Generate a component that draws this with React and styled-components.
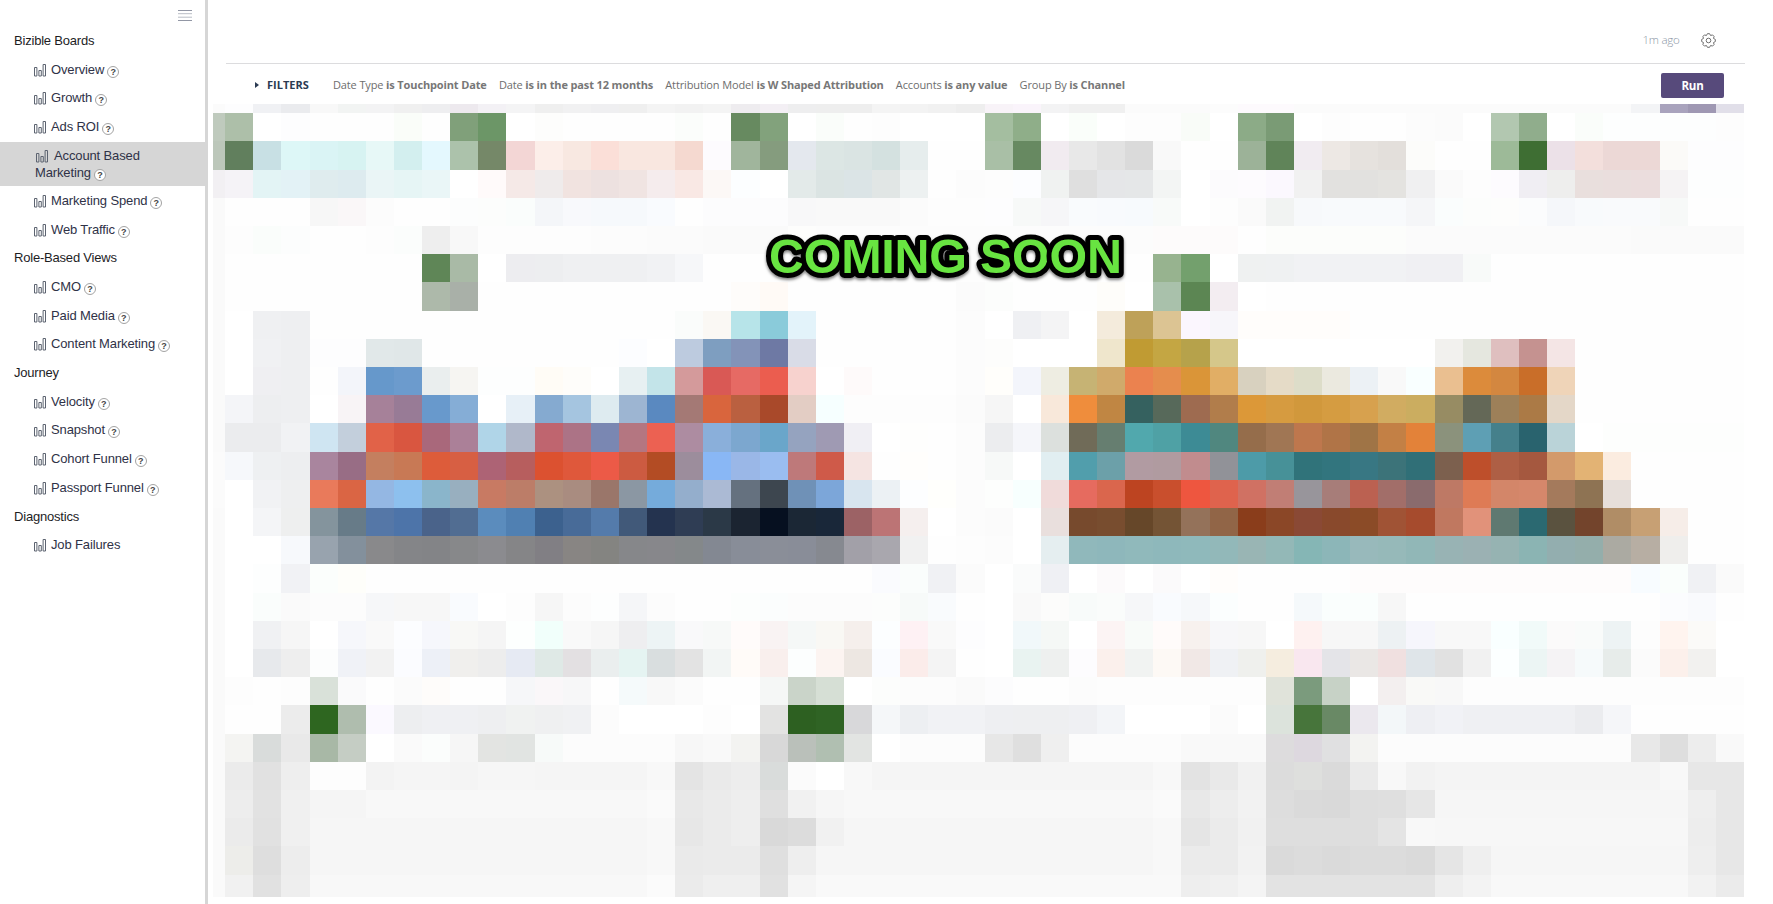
import React from 'react';
import styled, { createGlobalStyle, css } from 'styled-components';

const GlobalStyle = createGlobalStyle`
  * { box-sizing: border-box; }
  body { margin: 0; background: #fff; }
`;

const Page = styled.div`
  display: flex;
  width: 100%;
  height: 904px;
  overflow: hidden;
  background: #fff;
`;

const Sidebar = styled.nav`
  flex: none;
  width: 208px;
  border-right: 3px solid #d6d6d6;
  font-family: 'Liberation Sans', Arial, sans-serif;
  font-size: 13px;
`;

const MenuBar = styled.div`
  display: flex;
  justify-content: flex-end;
  height: 27px;
  padding: 10px 13px 0 0;
`;

const SectionTitle = styled.div`
  height: 28.7px;
  padding-left: 14px;
  line-height: 28.7px;
  color: #1d1d1f;
  letter-spacing: -0.2px;
`;

const NavItem = styled.div`
  height: 28.7px;
  padding-left: 33px;
  line-height: 28.7px;
  color: #2f3247;
  letter-spacing: -0.13px;
  white-space: nowrap;

  svg { vertical-align: -3px; margin-right: 4px; }

  ${(p) => p.$active && css`
    height: 44px;
    margin: 0 0 1.2px;
    padding: 5px 50px 0 35px;
    line-height: 17px;
    background: #d6d6d6;
    white-space: normal;
    svg { margin-right: 5px; }
  `}
`;

const Help = styled.span`
  display: inline-flex;
  align-items: center;
  justify-content: center;
  width: 12px;
  height: 12px;
  margin-left: 3px;
  border: 1px solid #a3a3a3;
  border-radius: 50%;
  background: #fff;
  color: #444;
  font-size: 9px;
  font-weight: 700;
  line-height: 10px;
  letter-spacing: 0;
  vertical-align: -1px;
`;

const Main = styled.main`
  flex: 1;
  min-width: 0;
  padding: 0 28px 0 5px;
  font-family: 'Open Sans', sans-serif;
`;

const StatusBar = styled.header`
  display: flex;
  align-items: flex-end;
  justify-content: flex-end;
  gap: 21px;
  height: 64px;
  margin-left: 13px;
  padding: 0 29.5px 15px 0;
  border-bottom: 1px solid #dcdcde;
`;

const Updated = styled.span`
  color: #8b96a5;
  font-size: 11.5px;
  font-weight: 300;
  line-height: 16px;
  letter-spacing: -0.25px;
`;

const FilterBar = styled.div`
  display: flex;
  align-items: center;
  height: 40px;
  padding: 0 21px 0 42px;
  font-size: 11px;
  color: #7c7c7c;
`;

const Caret = styled.i`
  width: 0;
  height: 0;
  margin: 2px 8px 0 0;
  border: 3.5px solid transparent;
  border-left: 4px solid #2b3b52;
  border-right: 0;
`;

const FiltersLabel = styled.span`
  width: 66px;
  color: #2b3b52;
  font-weight: 700;
`;

const Filter = styled.span`
  margin-right: 12.2px;
  color: #6e6e6e;
  letter-spacing: -0.132px;
  white-space: nowrap;
  b { color: #777; font-weight: 700; }
`;

const RunButton = styled.button`
  width: 63px;
  height: 25px;
  margin: 3px 0 0 auto;
  padding: 0;
  border: 0;
  border-radius: 2px;
  background: #574a7b;
  color: #fff;
  font: 700 11.5px/23px 'Open Sans', sans-serif;
  letter-spacing: -0.2px;
`;

const Board = styled.section`
  position: relative;
  width: 1532.4px;
`;

const MosaicRow = styled.div`
  display: grid;
  grid-template-columns: 12.2px repeat(54, 28.14px);
  height: ${(p) => p.$height};
`;

const Tile = styled.i`
  display: block;
`;

const Banner = styled.svg`
  position: absolute;
  left: 546px;
  top: 114px;
  filter: drop-shadow(0 2px 1.5px rgba(0, 0, 0, 0.5));

  text {
    fill: #68e441;
    stroke: #000;
    stroke-width: 10px;
    stroke-linejoin: round;
    paint-order: stroke fill;
    font: 700 48.5px 'Liberation Sans', Arial, sans-serif;
  }
`;

// A six-digit colour fills one column; "@n" repeats the last colour up to column n.
const rows = [
  'fbfbfb fdfdfe f0f1f4 eaebee f8f8f8 f2f4f3 f3f3f4 f0f0f0 eeeef0 ede9ee f3f1f5 f4f4f5 efefef f1f1f2 efeff1 efefef f4f4f4 f2f2f2 f4f4f4 eeecef f3eff4 eeeeef eeeeee eeeeee f4f4f4 f3f3f3 f1f1f1 eeeeee f8f3f8 faf4fb f3f3f4 f0f0f0 f0f0f0 fbfbfb @36 fcfcfc fdfafd fdfafd fbfbfb @51 f3f4f6 a9a3bd 9f98b3 e1dfe9',
  'bfcabd adbfa9 ffffff fdfdfe fefefe @7 fafdf9 fefefe 80a07a 6c9667 ffffff fdfdfc fefefe @17 fbfdfb fefefe 678a60 82a27c ffffff fafdfa fefefe fdfdfd ffffff @28 a4bea0 8fae89 ffffff fafefa ffffff fdfdfd fdfdfd f9fcf8 ffffff 8cab87 7a9b75 ffffff fdfdfd fefefe fefefe fcfcfc fbfbfb ffffff b2c7b0 90ad8c ffffff fafdfa fdfefe @54 fdfdfd',
  'bcc7ba 617f5d c8e0e4 ddf7f7 daf4f5 d7f3f2 e7f8f7 d3efef e4f8fe acc2ab 758868 f3d6d5 fceee9 f8e8e1 fbdfd8 f9e7e0 f9e7e0 f5d9d0 fdfbfe a0b59c 859c7e e4e8ee dce6e4 dae4e3 d4e1e0 e6eded fefefe fefefe a9bfa6 678961 f1ebf0 e8e8e8 e2e2e2 dadada f9f9f9 fefefe fefefe 9cb298 608459 f1ecf1 ede8e4 e6e2de e3dfdb fcfcfa fefefe fefefe 9dba98 3e6e33 ece1e8 f3dfdc ecd8d6 ecd8d6 fbfaf8 fdfdfe @55',
  'f2f0f3 f5f3f7 e3f4f5 e3f2f6 dfecee ddebef eaf5f6 e6f5f5 eaf6f7 ffffff fffafa f5e9e7 efebeb f1e3e0 ede1e0 f0e4e2 f5eced f9e8e4 fcf8f6 fcfeff ffffff e3eae9 dbe4e3 dbe4e6 e1e6e5 edf1f1 fefefe fcfcfc fdfdfd fcfdff f0f2f1 dfdfdf e5e6e8 e5e7e8 f3f5f4 ffffff fcfbfd fdfbfe fbf8fe f1f1f1 e2e1df e2e1df e4e3e0 f0f0f1 fafafa fdfdfd fdfbfe f0eef3 eeeeed e9dfdd eadedd ebdddd f5f3f4 fdfefe @55',
  'fafafa fefefe @4 f7f7f7 faf7f8 fcfcfc fefefe fefefe fcfdfd fcfdfc fafdfc f4f6f9 f8f9fc f6f9fc f6f9fc f9fbfe fefefe fcfcfd @21 f8f8f9 f9f9f9 @25 fbfbfb fdfdfd fdfdfd fdfdfe f7f9f8 f6f6f8 f9fbfd f8fafd f7fafd f8faf9 ffffff fdfdfd fafafa f1f3f2 f7f9fb f8fafc @43 f5f6f8 fafdfd fcfdfc fdfdfc fbfcfd f5f7fa f8fafc f9fafc f9fafc f7f9f8 fefefe @55',
  'fafafa fdfdfd fafdfb fcfdfd fefefe fefefe fdfdfd fbfdfc eeeeee f8f8f8 fdfdfd @14 fcfcfc fcfcfc fbfbfb fbfbfb fafafa @21 fdfdfc fcfcfc @34 fdfbfb @37 fefefe fcfdfb @43 fbfbfb @51 fafafa @55',
  'fafafa fefefe @8 5f8657 a9baa6 ffffff ededf0 edeef0 eff0f2 eff0f2 eff0f2 f1f2f4 f6f7f9 fefefe @26 fcfcfc fdfdfd fefefe @34 97b38f 73a06d ffffff eff1f1 eff1f2 f1f2f4 @43 f0f0f3 f0f0f3 f8faf9 fefefe @55',
  'fafafa fefefe @8 adb9aa a9b0a8 fefefe @19 fefcfa fffaf6 fefefe @27 fbfbfb fcfdfc fefefe @32 fefdfa ffffff a9c1ab 5c8653 f3edf1 ffffff fefefe @55',
  'fafafa ffffff eff0f2 eeeff1 fefefe @17 fafcfb faf8f4 b7e4e9 8acbda e3f3fa fefefe @27 fcfcfc ffffff eff0f3 f4f4f5 ffffff f4ebdc bea159 dcc493 fbf6fe f7f6fa fffdfb @41 fefefe @55',
  'fafafa ffffff f0f1f3 eeeff1 fdfdfe fdfdfe e1e8e9 e0e7e8 fefefe @15 fcfdff ffffff bdcbdf 7e9ec0 8393b8 6e79a4 d9dce7 fefefe @27 fcfcfc fdfdfc ffffff @32 efe6cc c09b33 c4a643 b6a24b d5c78a ffffff @44 f2f1ee e5e7df dfbfbf c59290 f4e5e5 fefefe @55',
  'fafafa ffffff efeff2 eeeff1 fefefe f3f5fa 6698cb 6c9bcd eaeeee f6f5f2 fdfefe fdfefe fffcf6 fefdfa ffffff e7f0f2 c3e4e9 d49a9b d95955 e66a64 eb5d4f f7d2ce ffffff fefafa fefefe @27 fcfcfc fffefb f3f5fb eeede2 c6b374 d0aa6b eb824f e58d4d da9538 e1ae65 d8d1bf e5dbc7 ddddc9 ebe9df ecf1f5 f9f9f9 f9ffff eabf90 dc8b3b d38740 c96e29 efd4b8 fefefe @55',
  'fafafa f4f5f8 edeef0 eeeff1 ffffff f8f4f6 a68199 987b96 6899cc 85add6 ffffff e7f0f7 85aad0 a5c5e0 deebf0 9db5d2 5a89c0 a47975 d9653d ba6040 a9492a e3cdc4 f6ffff fdfdfd @27 fbfbfb f6f6f6 ffffff f8e8da ef8d3c c08643 35615f 57695a 9e6b50 b17d4b dc9838 d69b40 d1983c d59c41 d7a14e d1ac61 cbad60 978c63 646857 9d8059 ab7a46 e4d7c8 fefefe @55',
  'fafafa ebecee ebecee f1f2f4 cfe5f2 c3cfdc e16248 d95640 a9687b ab8098 b0d5e8 b0b8ca bf656f ac7386 7a87b2 b47681 ec6152 ad8ca1 8aafda 7ca7cf 6aa6ca 95a3bf 9f9ab3 f0eff4 ffffff fefefd fefefe fcfcfc ecedef f5f6fa dce0dd 706b58 667e70 51a8ad 4fa1a5 3d8b95 50877f 956d4b a07654 be774d b07447 9f7446 c38045 e38239 8b927c 5e9fb4 45808b 29636e bad3d8 ffffff fdfefd @55',
  'fbfbfb f6f8fb eef0f2 edeef0 a9859e 986d85 c47f5f c87955 dd5c3a d75f43 ad6375 b75e5e dc5130 df583b ec5a47 cc5b41 b34c24 9c8d9c 89b7f5 9ab7e7 9abdf0 be797a cf5a49 f5e4e2 fefefe fffefc fefefe fcfcfc f7f9f8 ffffff e1eef1 519eac 6ca0a9 b19ba2 b09ba0 c18c8e 919298 4d9ba8 479198 30737a 32757e 387783 3c7379 306f77 7c604e be4f2b ae5f45 a5583f d39a6b e3b374 fbece0 fefefe @55',
  'fbfbfb ffffff f1f2f4 eeeff0 e97a5b da6544 94b7e3 8dc0ee 8ab5cb 98afbf c87a63 bc7d68 ac9180 a98c80 9a766a 8b97a3 75abdb 94aecc abbad4 65717f 3d464f 6f91b7 7ca6d9 d8e5ef ecf1f4 fdfeff fffffc fcfcfc fdfefd f7fffe f0dbda e66b5f da664d bd4421 c94f2d ee563f df634d d07163 c17e75 98959b a77d79 bb6151 a26e69 8a6b6d be7965 de7b55 d38669 d5876b a47a5c 8e7353 e7dfda fefefe @55',
  'fafafa ffffff f4f5f7 eeefef 84949d 677b88 5577a7 4d74a9 4a638a 516d92 5b8cbd 5080b2 3c618e 486b98 547bab 415979 24334f 2f3d54 2b3947 1b2431 061020 1b2735 192739 9c6265 bc7475 f5efee ffffff fcfcfc fbfbfb ffffff e9dfdd 774a2d 784d2f 664729 745435 94725a 916547 8a3d1b 8b4727 8a4935 89492c 8b4b27 a05335 a64b2d c07860 e1927a 5f7971 2b6971 5a523f 73442c b08d66 c7a074 f6ede8 fefefe @55',
  'fafafa ffffff ffffff f7f9fc 98a3ae 83909c 89898b 848588 838487 87888a 8b8b8f 858587 817f84 888583 848481 86878a 87878b 84888a 838892 888d98 8a8e98 898d98 868990 a2a0a8 a9a7ae f1f1f1 fefefe fdfdfd fcfcfc ffffff e5eef0 90b8bb 8eb7bb 90b9bb 8eb8bb 8fb9bb 92b8b9 99b5b4 93b8b7 85b6b5 8cb6b8 98b9bb 96b9b9 91b7b7 98b3b4 9bb1b3 96b3b2 8bb4b3 93aeaf 94aeab abaaa2 b7aea3 efeeec fefefe @55',
  'fafafa ffffff fdfefe f1f2f5 fbfefc fefefa fefefe @24 fafbfe fafdfc f0f1f4 fbfbfb ffffff fafbfb eff0f4 ffffff fcfafb ffffff fbfafb ffffff fffdfb fefefe @41 fefcfc @51 f8fcff fafefc f0f1f4 fafafa',
  'fafafa ffffff fafdfc fafafa fcfcfc fcfcfc f6f7f9 f7f7f7 f7f7f7 f9fbfe ffffff fdfdfd f6f6f6 fcfcfc fdfefe f5f6f8 fcfcfc fefefe @19 fcfefd fbfdfd fcfcfc @24 fcfdfc f7faf9 f9fbfd fefefe ffffff f9f9f9 fcfcfb f8fbfa fafcfb f6f7f9 f9fbfe f6f8fa fbfefe fefefe fefefe f5f9fb fafefd fafefd f7f7f7 fefefe @52 fbfcfe f9fafd fefefe',
  'fafafa ffffff f0f1f3 f6f6f6 ffffff f6f7fb f9f9f9 fcfdff f6f7fc f8f8f6 f5f5f5 fdfffe f1fffb f9f9f9 f6f6f6 eeeef0 edf4f5 f9f9fa f7f9f8 fffbfa f9f3f3 f5f8f7 f9f8f4 f5efec fcfeff fef1f4 f9f9f9 fdfdfe ffffff f1f8fa f5f8f6 ffffff fcf4f4 f8fbf9 fffbfa f7f1ee f7f7f9 f7f7f7 ffffff fef1f0 f7f7f7 f7f7f7 edf1f3 f6f6fc f8f8f8 f8f8f8 f9ffff f1faf9 fbfafa f9fbfa edf3f4 fdfdfd fff4ef fbfaf8 ffffff',
  'fafafa ffffff e7e9ec eeeeee fcfdfd f0f2f7 f2f2f2 fbfcff edf0f7 f0efed ededed e6eaf3 dfe9e6 e3e0e2 eaeeee e5f4f2 d9dedf e3e3e3 f2f5f4 fffbf8 f9efed fcfefe fcf4f1 ede7e2 fafcff fbecea f4f4f4 fefefe ffffff e9f3f1 eef0ef fdfcfe fbf0ec f1f3f2 fdf9f5 f1e8e6 eff1f4 eff0ed f5eddf f9e7ef e4e4e8 eae7e5 f0e0e0 dfe5e9 e1e1e1 f1f1f1 fcffff ecf5f4 f5f3f5 f6fafb e7ecea fbfbfb fcf0eb f2f1ef ffffff',
  'fafafa fdfdfd fefefe fdfdfd d9e1d9 fafafb fefefe fbfbfb fefcfa fefefe fefefe f6f7f9 faf7f9 f7f7f8 fefefe f5fafb f8f8f8 fbfbfb fefefe fefefe f5f7f6 cad4c9 d6dfd5 ffffff fcfdfc fcfcfc fcfcfc fafafa fcfcfd fefefe fefefe fcfcfc fdfdfd @38 e0e3da 7b9b7d c7d2c6 ffffff f3efef f9f9f7 f8f8f8 fdfdfd @55',
  'fafafa fefefe fefefe ececec 2e6620 afbdae fbf9ff edeef0 eff0f3 eff0f3 eeeff1 f0f2f1 eff0f1 f0f1f3 fcfcfc ffffff @18 fdfdfd ffffff e3e3e2 2d6021 2f6324 d8d8da f5f7f9 edeff2 f1f2f5 f1f2f5 eeeff2 eeeff1 eeeff1 eff0f3 f3f5f8 ffffff @36 fbfbfb ffffff dce3dc 47753b 698965 ebe8ee f3f7f9 eeeff3 f1f2f6 eff0f3 @49 ebecef f5f6f9 fefefe @55',
  'fafafa f4f4f2 d9dcdb e9e9e9 a8b8a6 c5cdc4 ffffff fafafa fbfdfc f6f6f6 e3e4e2 e1e4e2 f7faf9 fcfcfc @17 f7f7f7 f9f9f9 f3f3f1 d8d8d8 bac0ba b0bfb1 e2e4e2 ffffff fcfcfc @28 e7e7e7 dfdfdf efefef fcfcfc @35 f9f9f9 @38 dddcdd ddd8df e0e0e1 f3f3f1 fcfcfc @51 e8e8e8 dedede ededed f9f9f9',
  'fafafa ebebeb e1e1e1 eeeeee fdfdfd fdfdfd f3f3f3 f5f5f5 f5f5f5 f4f4f4 f6f6f6 f6f6f6 f5f5f5 @16 f8f8f8 e4e4e4 eaeaea ededed d9dcdb fbfbfb ffffff f8f8f8 f5f5f5 @34 f8f8f8 e3e3e3 e9e9e9 f1f1f1 dcdcdc dedfdd dadada eaeaea f8f8f8 f2f2f2 f4f4f4 @52 f8f8f8 e7e7e7 e7e7e7',
  'fafafa ededed e2e2e2 f0f0f0 f5f5f5 f5f5f5 f8f8f8 @16 fafafa e8e8e8 ebebeb eeeeee dfdfdf f1f1f1 f6f6f6 f8f8f8 @34 fafafa e8e8e8 ededed f2f2f2 dddddd dadada d9d9d9 dedede dfdfdf e6e6e6 f6f6f6 @53 eeeeee e7e7e7',
  'fafafa ebebeb e1e1e1 f0f0f0 f6f6f6 @16 f8f8f8 e7e7e7 ebebeb eeeeee d9d9d9 dcdcdc f1f1f1 f6f6f6 @34 f8f8f8 e5e5e5 ebebeb f1f1f1 dedede @42 e4e4e4 f8f8f8 f7f7f7 @53 ededed e7e7e7',
  'fafafa ededea dedede ededed f6f6f6 @16 f8f8f8 eaeaea ebebeb ebebeb dfdfdf eeeeee f6f6f6 @34 f8f8f8 ebebeb ebebeb f2f2f2 dadada dcdcdc dadada dcdcdc dcdcdc dadada e5e5e5 efefef f6f6f6 @53 eeeeee e7e7e7',
  'fafafa f1f1f1 e1e1e1 eeeeee f8f8f8 @16 fbfbfb ebebeb efefef efefef e1e1e1 f5f5f5 f9f9f9 @35 eeeeee f0f0f0 f4f4f4 e3e3e3 @44 eeeeee f3f3f3 f8f8f8 @53 f2f2f2 ebebeb',
].map((row) =>
  row.split(' ').reduce((cells, token) => {
    if (token[0] !== '@') return [...cells, token];
    const last = cells[cells.length - 1];
    return [...cells, ...Array(Math.max(0, Number(token.slice(1)) - cells.length)).fill(last)];
  }, [])
);

const rowHeight = (i) => (i === 0 ? '9.2px' : i === rows.length - 1 ? '22.2px' : '28.21px');

const sections = [
  ['Bizible Boards', ['Overview', 'Growth', 'Ads ROI', 'Account Based Marketing', 'Marketing Spend', 'Web Traffic']],
  ['Role-Based Views', ['CMO', 'Paid Media', 'Content Marketing']],
  ['Journey', ['Velocity', 'Snapshot', 'Cohort Funnel', 'Passport Funnel']],
  ['Diagnostics', ['Job Failures']],
];

const filters = [
  ['Date Type', 'is Touchpoint Date'],
  ['Date', 'is in the past 12 months'],
  ['Attribution Model', 'is W Shaped Attribution'],
  ['Accounts', 'is any value'],
  ['Group By', 'is Channel'],
];

const BarsIcon = () => (
  <svg width="14" height="14" fill="none" stroke="#5c6370" strokeWidth="1">
    <path d="M1.5 4.5h2.4v8.5h-2.4zM5.9 7.5h2.4v5.5h-2.4zM10.1 1.5h2.4v11.5h-2.4z" />
  </svg>
);

const MenuIcon = () => (
  <svg width="14" height="12">
    <path d="M0 .5h14M0 10.5h14" stroke="#9297a5" />
    <path d="M0 3.7h14M0 7.2h14" stroke="#b9bdc6" />
  </svg>
);

const GearIcon = () => {
  const point = (k, r) => {
    const a = (k * Math.PI) / 8;
    return `${(7.5 + r * Math.sin(a)).toFixed(2)} ${(7.5 - r * Math.cos(a)).toFixed(2)}`;
  };
  let d = `M${point(-0.4, 6.9)}`;
  for (let k = 0; k < 16; k += 2) {
    d += `L${point(k + 0.4, 6.9)}Q${point(k + 1, 4.1)} ${point(k + 1.6, 6.9)}`;
  }
  return (
    <svg width="15" height="15" fill="none" stroke="#6f6f6f" strokeWidth="1" strokeLinejoin="round">
      <path d={`${d}Z`} />
      <circle cx="7.5" cy="7.5" r="2.3" />
    </svg>
  );
};

export default function App() {
  return (
    <Page>
      <GlobalStyle />
      <Sidebar>
        <MenuBar><MenuIcon /></MenuBar>
        {sections.map(([title, items]) => (
          <React.Fragment key={title}>
            <SectionTitle>{title}</SectionTitle>
            {items.map((item) => (
              <NavItem key={item} $active={item === 'Account Based Marketing'}>
                <BarsIcon />{item}
                {item !== 'Job Failures' && <Help>?</Help>}
              </NavItem>
            ))}
          </React.Fragment>
        ))}
      </Sidebar>
      <Main>
        <StatusBar>
          <Updated>1m ago</Updated>
          <GearIcon />
        </StatusBar>
        <FilterBar>
          <Caret />
          <FiltersLabel>FILTERS</FiltersLabel>
          {filters.map(([name, value]) => (
            <Filter key={name}>{name} <b>{value}</b></Filter>
          ))}
          <RunButton>Run</RunButton>
        </FilterBar>
        <Board>
          {rows.map((cells, i) => (
            <MosaicRow key={i} $height={rowHeight(i)}>
              {cells.map((color, j) => <Tile key={j} style={{ background: `#${color}` }} />)}
            </MosaicRow>
          ))}
          <Banner width="380" height="76">
            <text x="10" y="54.5" textLength="353">COMING SOON</text>
          </Banner>
        </Board>
      </Main>
    </Page>
  );
}
